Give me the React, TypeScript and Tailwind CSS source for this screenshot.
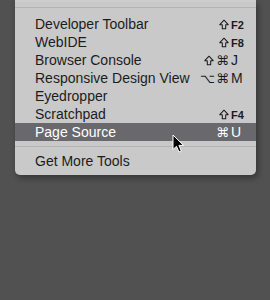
import React from "react";

type Item = { label: string; mods?: React.ReactNode; k?: React.ReactNode; active?: boolean };

function Shift() {
  return (
    <svg width="10" height="11" viewBox="0 0 10 11" className="inline-block">
      <path
        d="M5 1.2 L9.2 5.7 L6.7 5.7 L6.7 9.8 L3.3 9.8 L3.3 5.7 L0.8 5.7 Z"
        fill="none"
        stroke="currentColor"
        strokeWidth="1.05"
        strokeLinejoin="round"
      />
    </svg>
  );
}

const fn = (k: string) => <span className="text-[11px] font-bold">{k}</span>;

const items: Item[] = [
  { label: "Developer Toolbar", mods: <Shift />, k: fn("F2") },
  { label: "WebIDE", mods: <Shift />, k: fn("F8") },
  { label: "Browser Console", mods: <><Shift /><span className="ml-[2px]">⌘</span></>, k: "J" },
  { label: "Responsive Design View", mods: <><span>⌥</span><span className="ml-[1px]">⌘</span></>, k: "M" },
  { label: "Eyedropper" },
  { label: "Scratchpad", mods: <Shift />, k: fn("F4") },
  { label: "Page Source", mods: <span>⌘</span>, k: "U", active: true },
];

function Separator() {
  return <div className="my-[5px] h-px bg-[#b4b4b4]" />;
}

function Row({ item }: { item: Item }) {
  return (
    <div
      className={
        "flex h-[18px] items-center justify-between pl-5 pr-[9px] " +
        (item.active ? "bg-[#69696d] text-white" : "text-[#1c1c1c]")
      }
    >
      <span>{item.label}</span>
      {item.k && (
        <span className="flex items-center">
          <span className="flex items-center pr-[2px]" style={{ fontFamily: '"DejaVu Sans", sans-serif', fontSize: 13 }}>
            {item.mods}
          </span>
          <span className="w-4">{item.k}</span>
        </span>
      )}
    </div>
  );
}

function Cursor() {
  return (
    <svg
      className="absolute left-[172px] top-[134px]"
      width="13"
      height="20"
      viewBox="0 0 13 20"
    >
      <path
        d="M1 1 L1 15.5 L4.5 12.3 L7 18 L9.3 17 L6.9 11.4 L11.5 11.4 Z"
        fill="#000"
        stroke="#fff"
        strokeWidth="1"
        strokeLinejoin="round"
      />
    </svg>
  );
}

export default function App() {
  return (
    <div
      className="relative h-[300px] w-[270px] overflow-hidden bg-[#515151] pl-[15px] text-[14px] leading-none"
      style={{ fontFamily: '"Liberation Sans", "DejaVu Sans", sans-serif' }}
    >
      <div className="w-[241px] rounded-b-[5px] bg-[#c9c9c9] pb-[5px] shadow-[2px_3px_6px_rgba(0,0,0,0.35)]">
        <div className="h-[2px] bg-[#cdcdcd]" />
        <Separator />
        <div className="h-[2px]" />
        {items.map((it) => (
          <Row key={it.label} item={it} />
        ))}
        <Separator />
        <Row item={{ label: "Get More Tools" }} />
      </div>
      <Cursor />
    </div>
  );
}
